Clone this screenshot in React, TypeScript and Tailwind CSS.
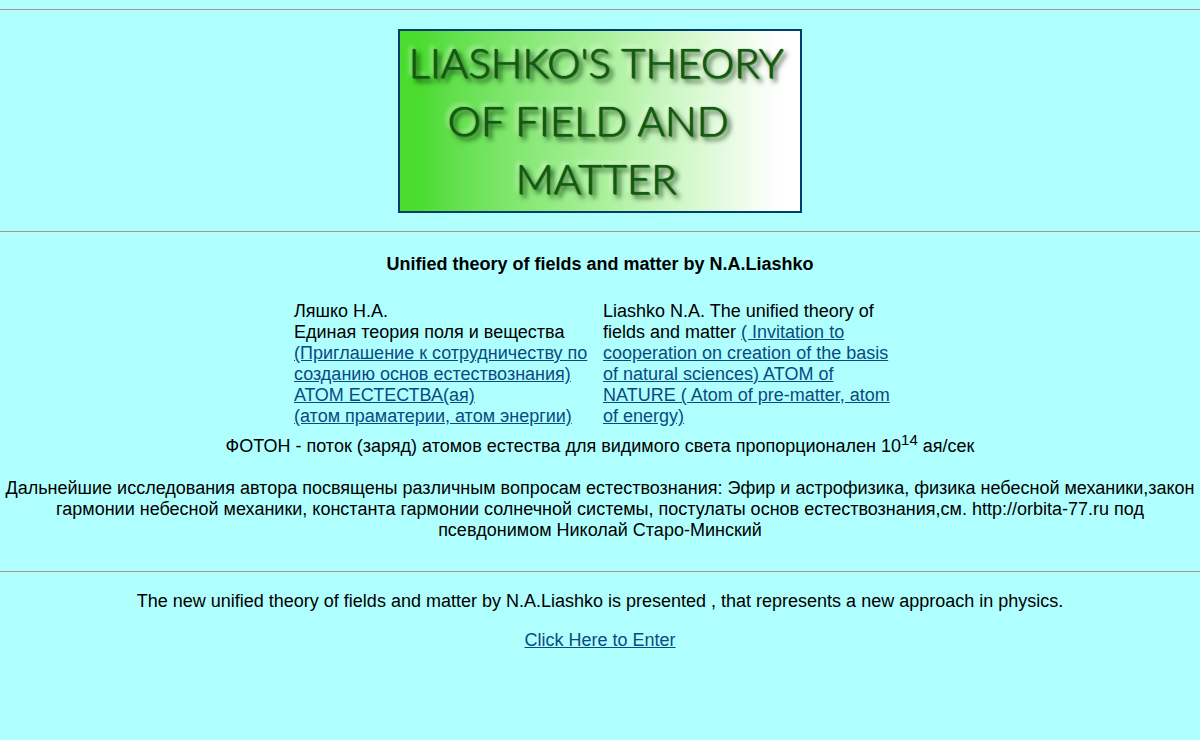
import type { ReactNode } from "react";

function Rule() {
  return <hr className="h-[2px] border-0 border-t border-b border-t-[#9a969e] border-b-[#c8f7f7]" />;
}

function TextLink({ children }: { children: ReactNode }) {
  return (
    <a href="#" className="text-[#0b4a80] underline">
      {children}
    </a>
  );
}

function Banner() {
  return (
    <h1 className="mx-auto my-[18px] flex w-full max-w-[404px] flex-col border-2 border-[#003f6d] bg-linear-to-r from-[#4bdc30] from-5% via-[#a9f09a] via-50% to-white to-95% pt-[2px] pb-[4px] pr-2 text-center font-['Lato',sans-serif] text-[42px] leading-[58px] font-light text-[#125a10] [text-shadow:0_0_1px_#0d4d0d,1px_1px_1px_#1c6b1a,4px_4px_4px_rgba(0,40,0,0.7),3px_4px_6px_rgba(0,40,0,0.4),-3px_-3px_4px_rgba(255,255,255,0.6)]">
      <span className="whitespace-nowrap">LIASHKO'S THEORY</span>
      <span className="pr-4">OF FIELD AND</span>
      <span>MATTER</span>
    </h1>
  );
}

export default function App() {
  return (
    <main className="min-h-screen bg-[#b0ffff] pt-[9px] pb-9 text-center font-['Liberation_Sans',Arial,sans-serif] text-[18px] leading-[21px] text-black">
      <Rule />
      <Banner />
      <Rule />

      <h2 className="mt-[21px] font-bold">Unified theory of fields and matter by N.A.Liashko</h2>

      <div className="mx-auto mt-[26px] grid max-w-[612px] grid-cols-[293px_1fr] gap-4 text-left">
        <p className="whitespace-nowrap">
          Ляшко Н.А.
          <br />
          Единая теория поля и вещества
          <br />
          <TextLink>
            (Приглашение к сотрудничеству по
            <br />
            созданию основ естествознания)
            <br />
            АТОМ ЕСТЕСТВА(ая)
            <br />
            (атом праматерии, атом энергии)
          </TextLink>
        </p>
        <p>
          Liashko N.A. The unified theory of fields and matter{" "}
          <TextLink>
            ( Invitation to cooperation on creation of the basis of natural sciences) ATOM of NATURE ( Atom of
            pre-matter, atom of energy)
          </TextLink>
        </p>
      </div>

      <p className="mt-[9px]">
        ФОТОН - поток (заряд) атомов естества для видимого света пропорционален 10
        <sup className="text-[15px]">14</sup> ая/сек
      </p>
      <p className="mt-[21px]">
        Дальнейшие исследования автора посвящены различным вопросам естествознания: Эфир и астрофизика, физика небесной
        механики,закон гармонии небесной механики, константа гармонии солнечной системы, постулаты основ
        естествознания,см. http://orbita-77.ru под псевдонимом Николай Старо-Минский
      </p>

      <div className="mt-[30px] mb-[18px]">
        <Rule />
      </div>

      <p>The new unified theory of fields and matter by N.A.Liashko is presented , that represents a new approach in physics.</p>
      <p className="mt-[18px]">
        <TextLink>Click Here to Enter</TextLink>
      </p>
    </main>
  );
}
